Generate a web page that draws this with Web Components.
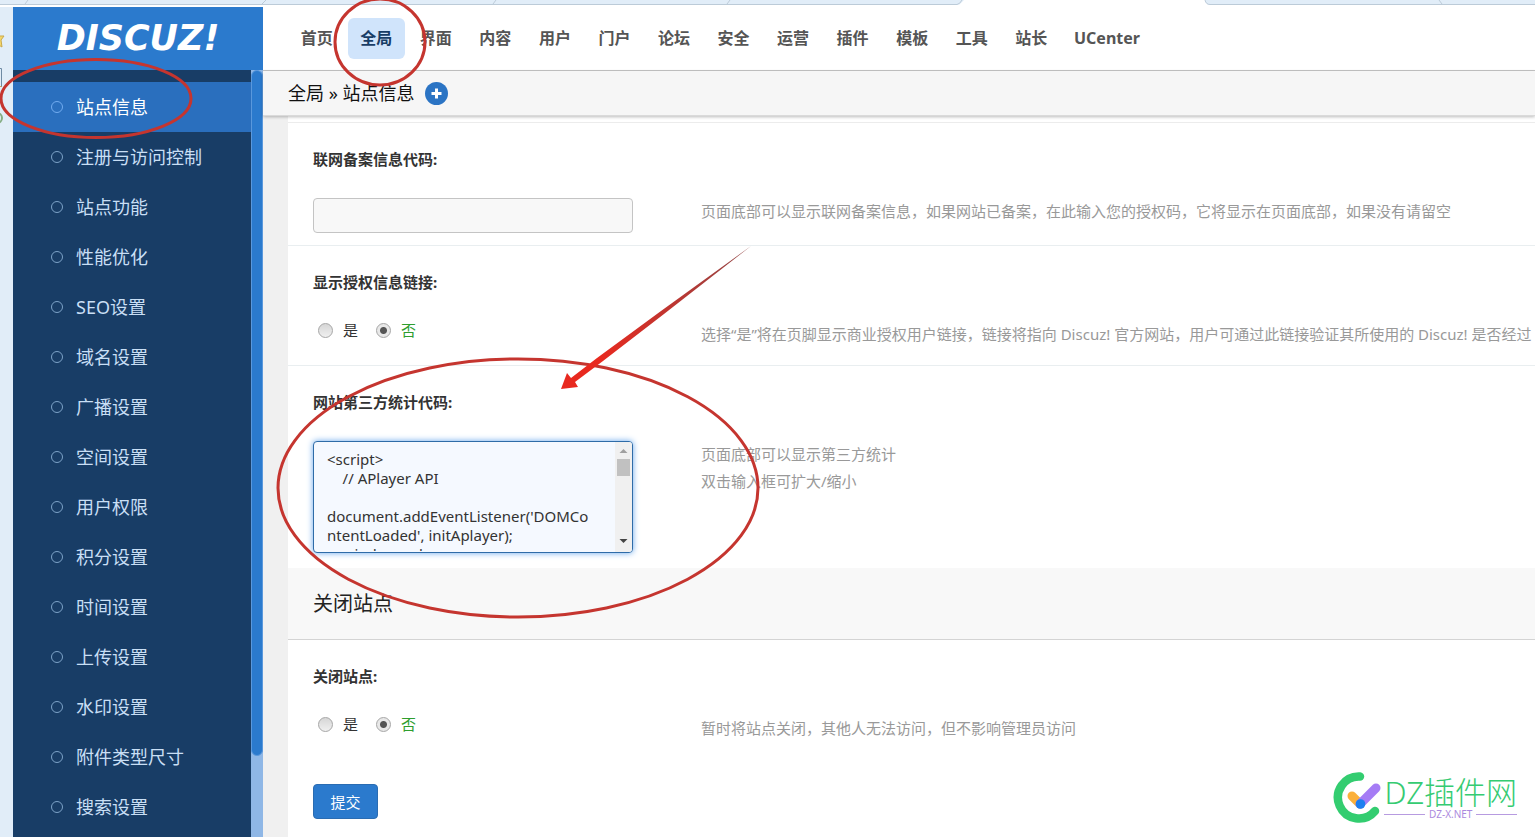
<!DOCTYPE html>
<html lang="zh-CN">
<head>
<meta charset="utf-8">
<title>Discuz! 管理中心</title>
<style>
html,body{margin:0;height:100%}
body{overflow:hidden;font-family:"Noto Sans","Noto Sans CJK SC",sans-serif;font-size:15px;color:#333;background:#fff}
</style>
</head>
<body>
<admin-page></admin-page>
<script>
const define = (name, html, setup) => {
  const t = document.createElement('template');
  t.innerHTML = html;
  customElements.define(name, class extends HTMLElement {
    constructor() {
      super();
      this.attachShadow({mode: 'open'}).append(t.content.cloneNode(true));
    }
    connectedCallback() { if (setup) setup(this, this.shadowRoot); }
  });
};

/* Browser tab edges above the page */
define('tab-strip', `
<style>
:host{display:block;height:7px;background:#fff}
svg{display:block;width:100%;height:7px}
</style>
<svg aria-hidden="true">
  <path d="M0 0H964L961 3Q960 5 957 5H0Z" fill="#e1edf8"/>
  <path d="M0 4.500H957Q960 4 962 0M25 4L28 0M262 4L266 0M493 4L496 0M727 4L730 0" fill="none" stroke="#bccbd8"/>
  <path d="M1205 0Q1206 5 1210 5H3000V0Z" fill="#e1edf8"/>
  <path d="M1205 0Q1206 4.500 1210 4.500H3000M1439 0L1442 4" fill="none" stroke="#bccbd8"/>
</svg>`);

/* Narrow browser side rail */
define('side-rail', `
<style>
:host{display:block;width:13px;background:#e1edf8}
svg{display:block;width:13px;height:130px}
</style>
<svg viewBox="0 0 13 130" fill="none" aria-hidden="true">
  <path d="M-5 28L-1 28L0 29L4 29L1 33L2 40L-3 37" fill="#f5d76b" stroke="#c9a94a"/>
  <path d="M-4 61.500H1.500V80" stroke="#6f8ba4"/>
  <path d="M-4 79.500H1.500" stroke="#d8a354"/>
  <circle cx="-3" cy="111" r="5" stroke="#85ad83" stroke-width="2"/>
</svg>`);

define('site-logo', `
<style>
:host{display:flex;align-items:center;justify-content:center;height:63px;background:#2b7acd}
a{color:#fff;text-decoration:none;font:italic bold 35px/63px "DejaVu Sans",sans-serif}
</style>
<a href="#"><slot></slot></a>`);

define('side-item', `
<style>
:host{display:block}
a{display:flex;align-items:center;gap:13px;height:50px;padding-left:38px;color:#c9dff5;font-size:18px;line-height:24px;text-decoration:none}
i{box-sizing:border-box;width:12px;height:12px;border:1px solid #7da3c8;border-radius:50%}
:host([current]) a{background:#2a6fbe;color:#fff}
:host([current]) i{border-color:#72acf0}
</style>
<a href="#"><i></i><slot></slot></a>`);

define('side-menu', `
<style>
:host{display:flex;flex:1;min-height:0;background:#183d66}
nav{flex:1;padding-top:12px;overflow:hidden}
.track{width:12px;background:#8fb7e6}
.thumb{box-sizing:border-box;height:686px;background:#2b7acd;border:1px solid #5a98dc;border-radius:6px}
</style>
<nav><slot></slot></nav><div class="track"><div class="thumb"></div></div>`);

define('top-nav', `
<style>
:host{display:flex;align-items:center;height:63px;padding-left:24px;background:#fff;border-bottom:1px solid #c6c6c6}
.main{display:grid;grid-template-columns:repeat(13,1fr);width:774px}
::slotted(a){margin:0 1px;color:#555;font-size:16px;font-weight:bold;line-height:41px;text-align:center;text-decoration:none;border-radius:6px}
::slotted(a[aria-current]){background:#d0e4fb;color:#183d66}
::slotted(a[slot]){padding:0 12px}
</style>
<nav class="main"><slot></slot></nav><slot name="last"></slot>`);

define('crumb-bar', `
<style>
:host{display:flex;align-items:center;gap:10px;position:relative;height:44px;padding-left:25px;background:#f6f6f6;border-bottom:1px solid #dadada;box-shadow:0 1px 3px #0004;color:#111;font-size:18px;line-height:24px}
button{width:23px;height:23px;padding:0;border:0;background:none}
svg{display:block}
</style>
<span><slot></slot></span>
<button aria-label="添加"><svg width="23" height="23" viewBox="0 0 23 23"><circle cx="11.500" cy="11.500" r="11.500" fill="#2b74c4"/><path d="M11.500 6.500v10M6.500 11.500h10" stroke="#fff" stroke-width="3"/></svg></button>`);

define('form-row', `
<style>
:host{display:grid;grid-template-columns:388px max-content;row-gap:28px;padding:25px 0 12px 25px;border-bottom:1px solid #e9eef0}
:host([last]){border-bottom:0}
.label{grid-column:1/-1;font-size:15px;font-weight:bold;line-height:22px;color:#333}
.hint{color:#999;font-size:15px;line-height:27px;white-space:pre}
</style>
<div class="label"><slot name="label"></slot></div>
<div><slot></slot></div>
<div class="hint"><slot name="hint"></slot></div>`);

define('text-field', `
<style>
:host{display:block}
input{box-sizing:border-box;display:block;width:320px;height:35px;padding:0 12px;border:1px solid #c4c4c4;border-radius:4px;background:#f8f8f8;font:inherit}
</style>
<input type="text">`, (el, root) => {
  root.querySelector('input').setAttribute('aria-label', el.getAttribute('label'));
});

define('yes-no', `
<style>
:host{display:flex;gap:18px;height:32px;padding-left:5px}
label{display:flex;align-items:center;gap:10px;height:18px;line-height:18px;font-size:15px}
input{appearance:none;width:15px;height:15px;margin:0;border:1px solid #a6a6a6;border-radius:50%;background:linear-gradient(#d6d6d6,#f0f0f0)}
input:checked{background:radial-gradient(circle,#555 0 3px,#e8e8e8 4px)}
.no{color:#2e9e2e}
</style>
<label><input type="radio" name="v">是</label>
<label class="no"><input type="radio" name="v" checked>否</label>`);

define('code-field', `
<style>
:host{display:block;padding-bottom:3px}
.box{box-sizing:border-box;display:flex;width:320px;height:112px;border:1px solid #2f6ca8;border-radius:4px;background:#f5f9ff;box-shadow:0 0 6px #66a6ec;overflow:hidden}
textarea{flex:1;min-width:0;margin:0 0 1px;padding:8px 20px 0 13px;border:0;outline:0;background:none;resize:none;overflow:hidden;color:#333;font:15px/19px "Noto Sans",sans-serif;word-break:break-all}
.bar{display:flex;flex-direction:column;align-items:center;width:17px;background:#f0f0f0}
.thumb{width:13px;height:17px;background:#c1c1c1}
svg{display:block}
.down{margin-top:auto}
</style>
<div class="box">
<textarea spellcheck="false">&lt;script&gt;
    // APlayer API

document.addEventListener('DOMContentLoaded', initAplayer);
    window.onl</textarea>
<div class="bar">
  <svg width="17" height="17"><path d="M4.500 11h8L8.500 7Z" fill="#a0a0a0"/></svg>
  <div class="thumb"></div>
  <svg class="down" width="17" height="19"><path d="M4.500 6h8L8.500 10Z" fill="#444"/></svg>
</div>
</div>`, (el, root) => {
  root.querySelector('textarea').setAttribute('aria-label', el.getAttribute('label'));
});

define('section-title', `
<style>
:host{display:block;background:#f8f8f8;border-bottom:1px solid #d4d4d4}
h2{margin:0;padding-left:25px;color:#222;font-size:20px;font-weight:normal;line-height:71px}
</style>
<h2><slot></slot></h2>`);

define('submit-button', `
<style>
:host{display:block;padding:25px 25px 18px}
button{width:65px;height:35px;padding:0;border:1px solid #2a6cb2;border-radius:4px;background:#2b7acd;color:#fff;font:15px "Noto Sans","Noto Sans CJK SC",sans-serif}
</style>
<button type="submit"><slot></slot></button>`);

/* Hand-drawn marks over the page */
define('mark-layer', `
<style>
:host{position:absolute;inset:0;overflow:hidden;pointer-events:none}
svg{display:block}
</style>
<svg width="800" height="640" fill="none" stroke="#c5352f" stroke-width="3" aria-hidden="true">
  <ellipse cx="96" cy="98.500" rx="95" ry="39"/>
  <ellipse cx="380" cy="42" rx="45" ry="43"/>
  <ellipse cx="518" cy="488" rx="240" ry="129"/>
  <linearGradient id="g" x1="751" y1="246" x2="600" y2="360" gradientUnits="userSpaceOnUse"><stop stop-color="#8f4545"/><stop offset="1" stop-color="#e8291f"/></linearGradient>
  <path d="M751 246L661 311L597 358L571 378L567 373L561 389L578 387L575 382L603 361L664 314Z" fill="url(#g)" stroke="none"/>
</svg>`);

define('dz-watermark', `
<style>
:host{position:absolute;right:18px;bottom:14px;display:flex;align-items:center;gap:2px;pointer-events:none}
svg{display:block}
.name{color:#35cb72;font-size:31px;font-weight:300;line-height:34px;white-space:nowrap}
.site{display:flex;align-items:center;gap:4px;color:#ab8ade;font-size:10px;line-height:10px}
.site::before,.site::after{content:"";flex:1;height:1px;background:#b79be0}
</style>
<svg width="49" height="52" viewBox="0 0 49 52" fill="none" stroke-linecap="round" aria-hidden="true">
  <path d="M27 5.500A21 21 0 1 0 42 40" stroke="#33cd70" stroke-width="8.500"/>
  <path d="M19 25L27 33" stroke="#fbb03b" stroke-width="9"/>
  <path d="M27 33L43 17" stroke="#a57cf5" stroke-width="9"/>
  <circle cx="27.500" cy="33" r="4.800" fill="#1d7ff0"/>
</svg>
<div><div class="name">DZ插件网</div><div class="site">DZ-X.NET</div></div>`);

define('admin-page', `
<style>
:host{display:flex;flex-direction:column;position:relative;height:100vh;overflow:hidden}
.body{display:flex;flex:1;min-height:0}
aside{display:flex;flex-direction:column;width:250px}
main{flex:1;min-width:0}
.canvas{padding-left:25px;background:#f0f0f0}
form{min-height:100vh;padding-top:6px;background:#fff;overflow:hidden}
.edge{border-top:1px solid #ececec}
</style>
<tab-strip></tab-strip>
<div class="body">
  <side-rail></side-rail>
  <aside>
    <site-logo>DISCUZ!</site-logo>
    <side-menu>
      <side-item current>站点信息</side-item><side-item>注册与访问控制</side-item><side-item>站点功能</side-item>
      <side-item>性能优化</side-item><side-item>SEO设置</side-item><side-item>域名设置</side-item>
      <side-item>广播设置</side-item><side-item>空间设置</side-item><side-item>用户权限</side-item>
      <side-item>积分设置</side-item><side-item>时间设置</side-item><side-item>上传设置</side-item>
      <side-item>水印设置</side-item><side-item>附件类型尺寸</side-item><side-item>搜索设置</side-item>
    </side-menu>
  </aside>
  <main>
    <top-nav>
      <a href="#">首页</a><a href="#" aria-current="page">全局</a><a href="#">界面</a><a href="#">内容</a><a href="#">用户</a><a href="#">门户</a><a href="#">论坛</a><a href="#">安全</a><a href="#">运营</a><a href="#">插件</a><a href="#">模板</a><a href="#">工具</a><a href="#">站长</a><a href="#" slot="last">UCenter</a>
    </top-nav>
    <crumb-bar>全局 » 站点信息</crumb-bar>
    <div class="canvas">
      <form>
        <div class="edge"></div>
        <form-row><span slot="label">联网备案信息代码:</span><text-field label="联网备案信息代码"></text-field><span slot="hint">页面底部可以显示联网备案信息，如果网站已备案，在此输入您的授权码，它将显示在页面底部，如果没有请留空</span></form-row>
        <form-row><span slot="label">显示授权信息链接:</span><yes-no></yes-no><span slot="hint">选择“是”将在页脚显示商业授权用户链接，链接将指向 Discuz! 官方网站，用户可通过此链接验证其所使用的 Discuz! 是否经过</span></form-row>
        <form-row last><span slot="label">网站第三方统计代码:</span><code-field label="网站第三方统计代码"></code-field><span slot="hint">页面底部可以显示第三方统计
双击输入框可扩大/缩小</span></form-row>
        <section-title>关闭站点</section-title>
        <form-row last><span slot="label">关闭站点:</span><yes-no></yes-no><span slot="hint">暂时将站点关闭，其他人无法访问，但不影响管理员访问</span></form-row>
        <submit-button>提交</submit-button>
      </form>
    </div>
  </main>
</div>
<mark-layer></mark-layer>
<dz-watermark></dz-watermark>`);
</script>
</body>
</html>
